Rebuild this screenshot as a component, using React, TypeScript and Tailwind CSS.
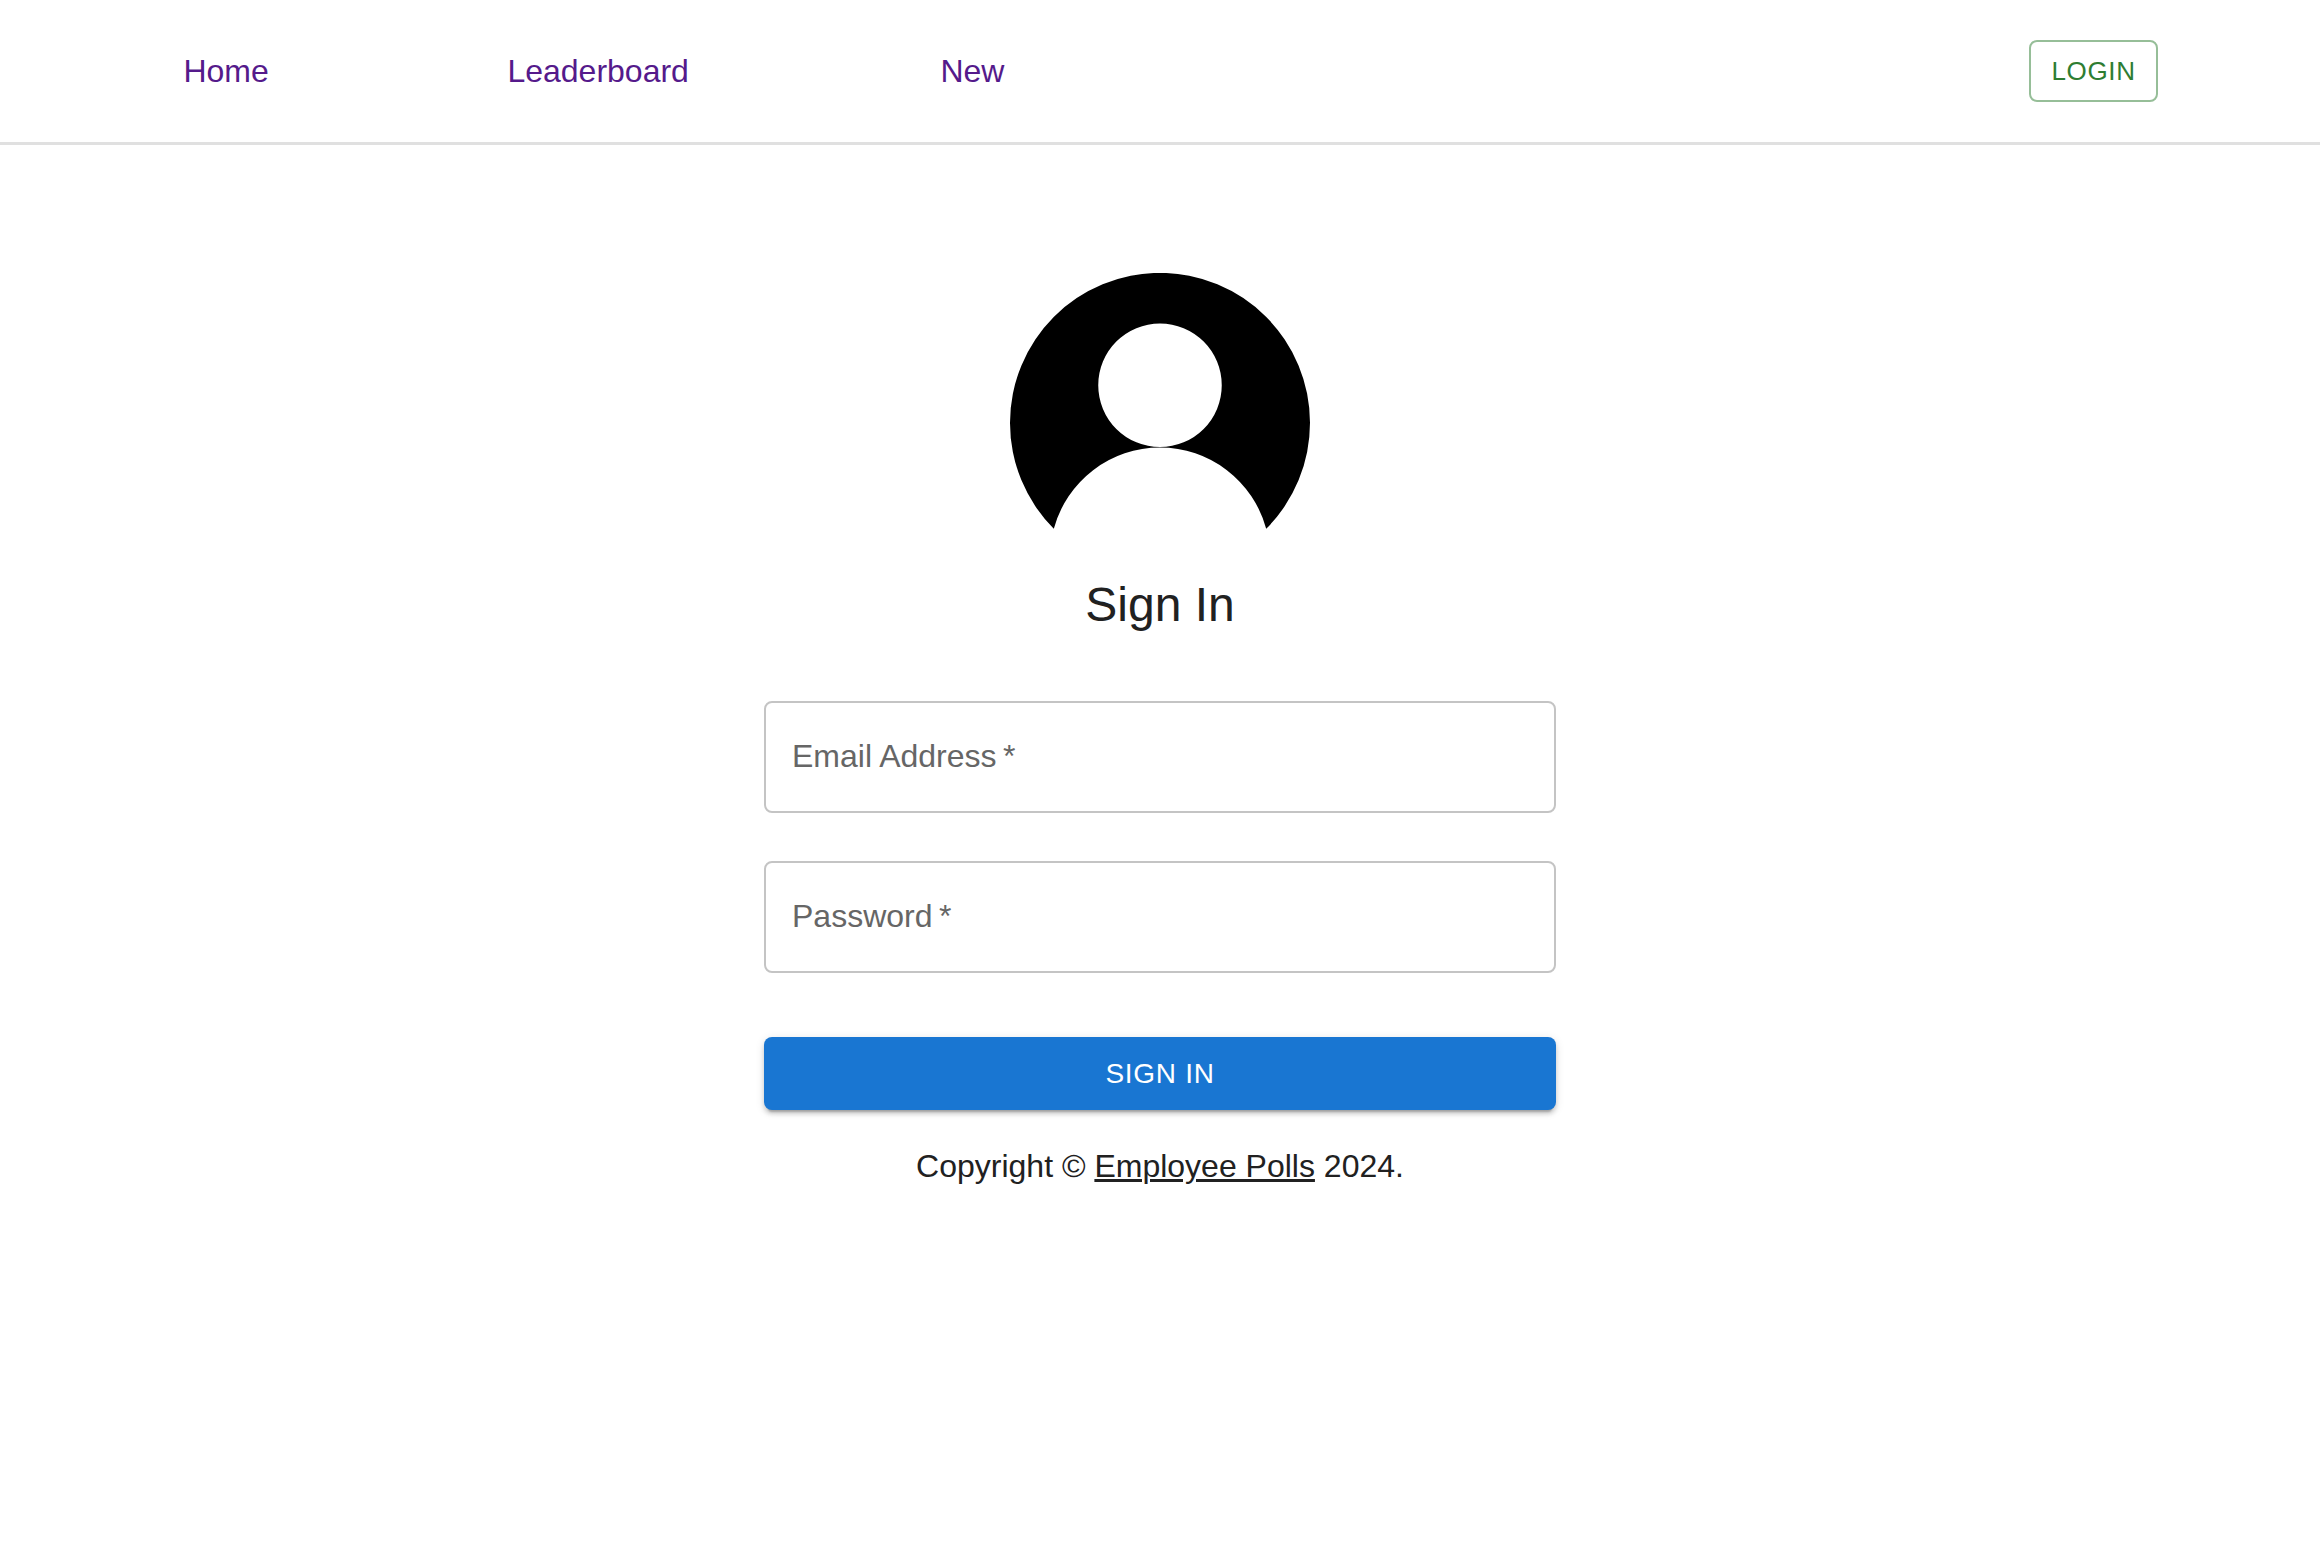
import React from "react";

const links = [
  { label: "Home", cell: "w-[324px]" },
  { label: "Leaderboard", cell: "w-[433px]" },
  { label: "New", cell: "" },
];

function Header() {
  return (
    <header className="flex items-center justify-between border-b-3 border-[#e0e0e0] px-[7%] py-10">
      <nav className="flex pl-[21px] text-[32px] leading-[48px] text-[#551a8b]">
        {links.map((link) => (
          <div key={link.label} className={link.cell}>
            <a href="#">{link.label}</a>
          </div>
        ))}
      </nav>
      <button
        type="button"
        className="rounded-lg border-2 border-[#2e7d32]/50 px-5 py-1.5 text-[26px] leading-[46px] tracking-wide text-[#2e7d32]"
      >
        LOGIN
      </button>
    </header>
  );
}

function Avatar() {
  return (
    <svg viewBox="0 0 300 300" className="size-[300px]" aria-hidden="true">
      <path
        fill="#000"
        fillRule="evenodd"
        d="M43.8 255.8A150 150 0 1 1 256.2 255.8A110 110 0 0 0 43.8 255.8ZM150 50.5A61.75 61.75 0 1 0 150 174A61.75 61.75 0 1 0 150 50.5Z"
      />
    </svg>
  );
}

function Field({ id, label, type }: { id: string; label: string; type: string }) {
  return (
    <div className="relative">
      <input
        id={id}
        type={type}
        required
        placeholder=" "
        className="peer block h-28 w-full rounded-lg border-2 border-[#c4c4c4] bg-transparent px-[26px] text-[32px] text-[#212121] shadow-none outline-none focus:border-[#1976d2]"
      />
      <label
        htmlFor={id}
        className="pointer-events-none absolute inset-y-0 left-7 flex items-center pb-0.5 text-[32px] leading-[48px] text-[#666666] peer-focus:hidden peer-[:not(:placeholder-shown)]:hidden"
      >
        {label}
        {"\u2009*"}
      </label>
    </div>
  );
}

export default function App() {
  return (
    <div className="min-h-screen bg-white font-['Liberation_Sans',Arial,sans-serif] text-[#212121]">
      <Header />
      <main className="mx-auto flex w-full max-w-[792px] flex-col items-center pt-32">
        <Avatar />
        <h1 className="text-[48px] leading-[64px]">Sign In</h1>
        <form className="mt-16 flex w-full flex-col gap-12" onSubmit={(e) => e.preventDefault()}>
          <Field id="email" label="Email Address" type="email" />
          <Field id="password" label="Password" type="password" />
          <button
            type="submit"
            className="mt-4 w-full rounded-lg bg-[#1976d2] py-3 text-[28px] leading-[49px] tracking-wide text-white shadow-[0_6px_2px_-4px_rgba(0,0,0,0.2),0_4px_4px_0_rgba(0,0,0,0.14),0_2px_10px_0_rgba(0,0,0,0.12)]"
          >
            SIGN IN
          </button>
        </form>
        <p className="mt-8 text-[32px] leading-[48px]">
          Copyright ©{" "}
          <a href="#" className="underline decoration-3">
            Employee Polls
          </a>{" "}
          2024.
        </p>
      </main>
    </div>
  );
}
